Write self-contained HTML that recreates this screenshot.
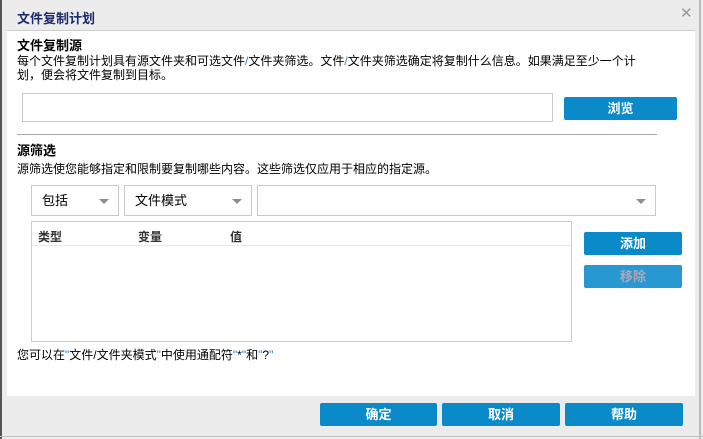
<!DOCTYPE html>
<html><head><meta charset="utf-8"><style>
*{margin:0;padding:0;box-sizing:border-box}
body{width:703px;height:439px;background:#ececec;font-family:"Liberation Sans","Noto Sans CJK SC",sans-serif;font-size:12px;color:#000;position:relative;overflow:hidden}
.a{position:absolute}
.btn{position:absolute;background:#0a8ac8;color:#fff;font-weight:bold;font-size:13px;text-align:center;border-radius:2px}
.sel{position:absolute;border:1px solid #c8c8c8;background:#fff;padding-left:10px;font-size:13px}
.arr{position:absolute;right:9px;top:13px;width:0;height:0;border-left:5px solid transparent;border-right:5px solid transparent;border-top:5px solid #8a8f95}
</style></head><body>
<div class="a" style="left:0;top:0;width:2px;height:439px;background:#555"></div>
<div class="a" style="left:699px;top:0;width:2px;height:439px;background:#bbb"></div>
<div class="a" style="left:0;top:436px;width:703px;height:1px;background:#c0c0c0"></div>
<div class="a" style="left:17px;top:8px;color:#1c2a6e;font-weight:bold;font-size:13px">文件复制计划</div>
<div class="a" style="left:680px;top:4px;color:#999;font-size:15px">✕</div>
<div class="a" style="left:7px;top:30px;width:688px;height:366px;background:#fff;border-top:1px solid #ccc"></div>
<div class="a" style="left:17px;top:35px;font-weight:bold;font-size:13px">文件复制源</div>
<div class="a" style="left:17px;top:54px;line-height:14px;width:640px">每个文件复制计划具有源文件夹和可选文件<span style="color:#2a7fd0">/</span>文件夹筛选。文件<span style="color:#2a7fd0">/</span>文件夹筛选确定将复制什么信息。如果满足至少一个计<br>划，便会将文件复制到目标。</div>
<div class="a" style="left:22px;top:93px;width:531px;height:29px;border:1px solid #c8c8c8"></div>
<div class="btn" style="left:564px;top:97px;width:113px;height:23px;line-height:23px">浏览</div>
<div class="a" style="left:17px;top:134px;width:640px;height:1px;background:#aaa"></div>
<div class="a" style="left:17px;top:140px;font-weight:bold;font-size:13px">源筛选</div>
<div class="a" style="left:17px;top:160px">源筛选使您能够指定和限制要复制哪些内容。这些筛选仅应用于相应的指定源。</div>
<div class="sel" style="left:31px;top:185px;width:88px;height:31px;line-height:29px">包括<div class="arr"></div></div>
<div class="sel" style="left:124px;top:185px;width:128px;height:31px;line-height:29px">文件模式<div class="arr"></div></div>
<div class="sel" style="left:257px;top:185px;width:399px;height:31px"><div class="arr"></div></div>
<div class="a" style="left:31px;top:221px;width:541px;height:121px;border:1px solid #c8ced6"></div>
<div class="a" style="left:32px;top:245px;width:539px;height:1px;background:#e4e7eb"></div>
<div class="a" style="left:38px;top:228px;font-weight:bold;color:#333">类型</div>
<div class="a" style="left:138px;top:228px;font-weight:bold;color:#333">变量</div>
<div class="a" style="left:230px;top:228px;font-weight:bold;color:#333">值</div>
<div class="btn" style="left:584px;top:232px;width:98px;height:23px;line-height:23px">添加</div>
<div class="btn" style="left:584px;top:265px;width:98px;height:23px;line-height:23px;background:#2898d2;color:#aab">移除</div>
<div class="a" style="left:17px;top:346px">您可以在<span style="color:#2a7fd0">"</span>文件/文件夹模式<span style="color:#2a7fd0">"</span>中使用通配符<span style="color:#2a7fd0">"</span>*<span style="color:#2a7fd0">"</span>和<span style="color:#2a7fd0">"</span>?<span style="color:#2a7fd0">"</span></div>
<div class="btn" style="left:320px;top:403px;width:117px;height:23px;line-height:23px">确定</div>
<div class="btn" style="left:442px;top:403px;width:118px;height:23px;line-height:23px">取消</div>
<div class="btn" style="left:565px;top:403px;width:118px;height:23px;line-height:23px">帮助</div>
</body></html>
